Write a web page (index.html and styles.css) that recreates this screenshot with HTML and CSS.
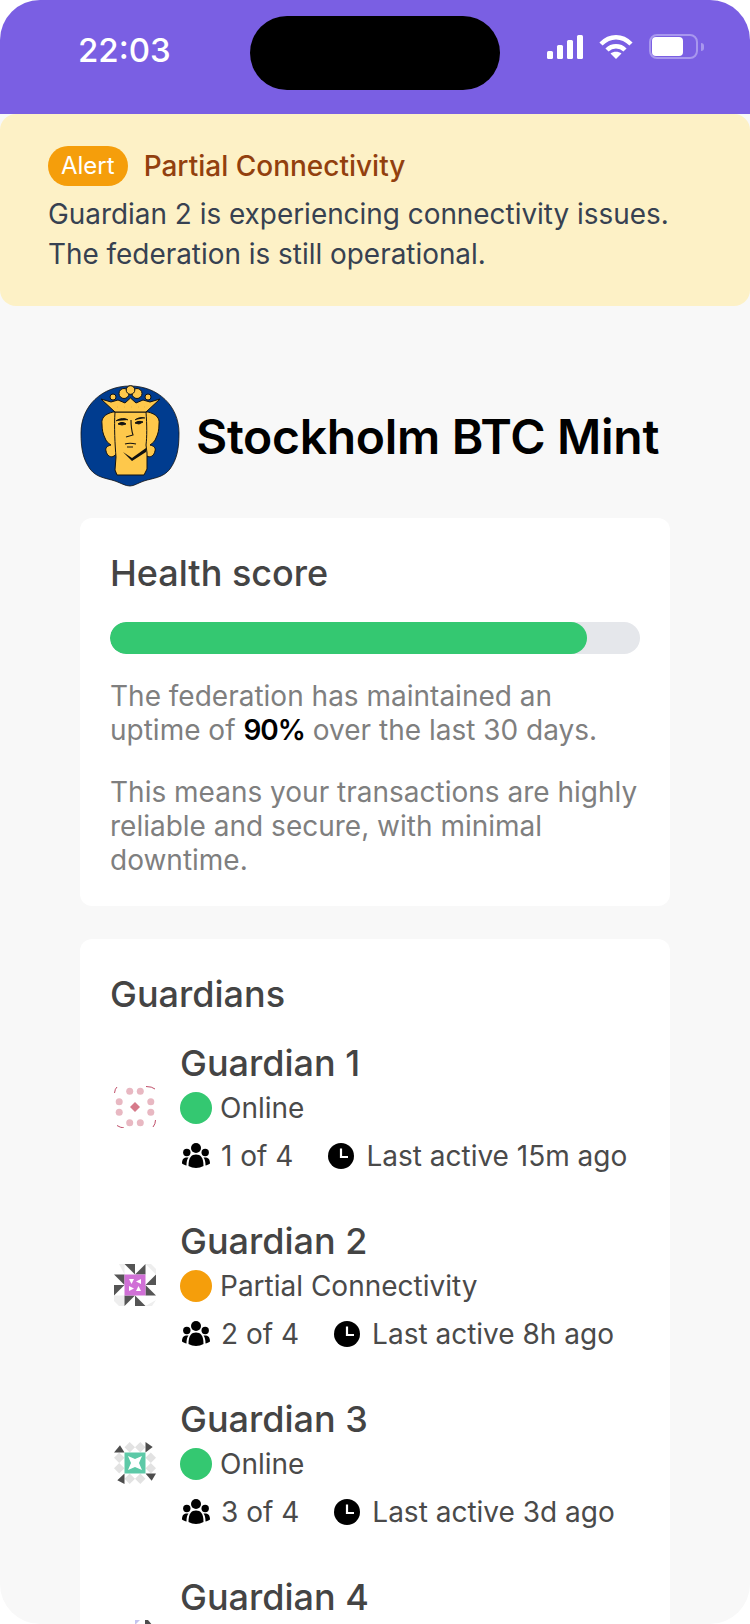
FILE: index.html
```html
<!DOCTYPE html>
<html lang="en">
<head>
    <meta charset="UTF-8">
    <meta name="viewport" content="width=device-width, initial-scale=1.0">
    <title>Stockholm BTC Mint</title>
    <link rel="stylesheet" href="styles.css">
</head>
<body>
<div class="screen">

    <header class="status-bar">
        <span class="time">22:03</span>
        <div class="island"></div>
        <div class="status-icons">
            <svg class="signal" width="36" height="24" viewBox="0 0 36 24" fill="#fff">
                <rect x="0" y="16" width="6" height="8" rx="1.500"/>
                <rect x="10" y="10" width="6" height="14" rx="1.500"/>
                <rect x="20" y="5" width="6" height="19" rx="1.500"/>
                <rect x="30" y="0" width="6" height="24" rx="1.500"/>
            </svg>
            <svg class="wifi" width="34" height="24" viewBox="0 0 34 24" fill="none" stroke="#fff" stroke-width="4.500">
                <path d="M2 9 C11 0 23 0 32 9"/>
                <path d="M8 15 C13 10 21 10 26 15"/>
                <path d="M11.500 18.500 L17 24 L22.500 18.500 C19.500 16 14.500 16 11.500 18.500 Z" fill="#fff" stroke="none"/>
            </svg>
            <div class="battery">
                <div class="battery-level"></div>
            </div>
            <div class="battery-cap"></div>
        </div>
    </header>

    <section class="alert">
        <div class="alert-head">
            <span class="alert-badge">Alert</span>
            <span class="alert-title">Partial Connectivity</span>
        </div>
        <p>Guardian 2 is experiencing connectivity issues.<br>The federation is still operational.</p>
    </section>

    <main class="content">
        <div class="mint">
            <svg class="mint-logo" width="100" height="102" viewBox="0 0 100 102">
                <path d="M50 1 C78 1 99 21 99 48 C99 64 97 74 90 84 C83 93 73 93 64 96 C58 98 54 101 50 101 C45 101 41 98 35 96 C26 93 17 93 10 84 C3 74 1 64 1 48 C1 21 22 1 50 1 Z" fill="#003c8f" stroke="#111" stroke-width="0.800"/>
                <path d="M33 27 C25 29 21 33 22 39 C22 45 23 49 25 53 C26 56 28 58 31 60 C27 61 25 63 26 66 C27 71 31 73 34 71 C37 69 38 67 38 65 L63 65 C63 67 64 69 67 71 C70 73 74 71 75 66 C76 63 74 61 70 60 C73 58 75 56 76 53 C78 49 79 45 79 39 C80 33 76 29 68 27 Z" fill="#fec84b" stroke="#111" stroke-width="1"/>
                <path d="M35 27 L66 27 C67 40 67 52 66 60 L67 68 L67 84 L64 90 L37 90 L35 85 L36 72 C35 60 34 42 35 27 Z" fill="#fec84b" stroke="#111" stroke-width="1"/>
                <g fill="#fec84b" stroke="#111" stroke-width="1">
                    <circle cx="33" cy="12" r="3"/>
                    <circle cx="68" cy="12" r="3"/>
                    <circle cx="44" cy="8.500" r="5"/>
                    <circle cx="57" cy="8.500" r="5"/>
                    <circle cx="50.500" cy="5" r="4.300"/>
                    <path d="M35 27 L21 14 L31 17 L38 15 L45 18 L50.500 13 L56 18 L63 15 L70 17 L80 14 L66 27 Z"/>
                </g>
                <path d="M37 22 L37.100 22 M44 22 L44.100 22 M51 22 L51.100 22 M58 22 L58.100 22 M64 22 L64.100 22" stroke="#111" stroke-width="1.200"/>
                <path d="M36 36 C40 33 45 33 48 35 M65 33 C61 32 57 33 55 35 M38 39 C40 37 44 37 46 39 L42 40 Z M55 38 C57 36 61 36 63 37 L59 39 Z" fill="#111" stroke="#111" stroke-width="1"/>
                <path d="M51 35 C51 42 52 47 53 50 L46 52 M45 59 C48 58 52 58 56 59 M47 62 L53 62" fill="none" stroke="#111" stroke-width="1.100"/>
                <path d="M43 67 L52 73 L66 63 L66 67 L52 76 Z" fill="#111"/>
            </svg>
            <h1>Stockholm BTC Mint</h1>
        </div>

        <section class="card health">
            <h2>Health score</h2>
            <div class="bar"><div class="bar-fill" style="width: 90%"></div></div>
            <p>The federation has maintained an uptime of <strong>90%</strong> over the last 30 days.</p>
            <p>This means your transactions are highly reliable and secure, with minimal downtime.</p>
        </section>

        <section class="card guardians">
            <h2>Guardians</h2>

            <div class="guardian">
                <svg class="avatar" width="42" height="42" viewBox="0 0 42 42">
                    <g fill="#e8b8c2">
                        <circle cx="15.700" cy="5.200" r="3.500"/><circle cx="26.300" cy="5.200" r="3.500"/>
                        <circle cx="5.200" cy="15.700" r="3.500"/><circle cx="36.800" cy="15.700" r="3.500"/>
                        <circle cx="5.200" cy="26.300" r="3.500"/><circle cx="36.800" cy="26.300" r="3.500"/>
                        <circle cx="15.700" cy="36.800" r="3.500"/><circle cx="26.300" cy="36.800" r="3.500"/>
                    </g>
                    <path d="M21 16 L26 21 L21 26 L16 21 Z" fill="#d67a8a"/>
                    <path d="M0.500 7 Q1 2.500 3 1 M32 0.500 Q38 0.500 41 3 M41.500 34 Q41.500 38 39 41 M3 39.500 Q6 41.500 10 42" fill="none" stroke="#b83a58" stroke-width="0.900"/>
                </svg>
                <div class="guardian-info">
                    <h3>Guardian 1</h3>
                    <div class="state"><span class="dot dot-online"></span>Online</div>
                    <div class="meta">
                        <span class="meta-item">
                            <svg class="icon" width="28" height="25" viewBox="0 0 28 25"><use href="#group"/></svg>
                            1 of 4
                        </span>
                        <span class="meta-item">
                            <svg class="icon" width="26" height="26" viewBox="0 0 26 26"><use href="#clock"/></svg>
                            Last active 15m ago
                        </span>
                    </div>
                </div>
            </div>

            <div class="guardian">
                <svg class="avatar" width="42" height="42" viewBox="0 0 42 42">
                    <g fill="#eee">
                        <path d="M5 0 L10.500 0 L10.500 10.500 Z"/><path d="M31.500 0 L37 0 L42 5 L42 10.500 Z"/>
                        <path d="M0 31.500 L10.500 31.500 L10.500 42 L5 42 L0 37 Z"/><path d="M31.500 42 L42 36 L38 42 Z"/>
                    </g>
                    <g fill="#555">
                        <path d="M10.500 0 L21 0 L21 10.500 Z"/><path d="M31.500 0 L31.500 10.500 L21 10.500 Z"/>
                        <path d="M0 10.500 L10.500 10.500 L10.500 21 Z"/><path d="M42 10.500 L42 21 L31.500 21 Z"/>
                        <path d="M0 21 L10.500 21 L0 31.500 Z"/><path d="M31.500 21 L42 31.500 L31.500 31.500 Z"/>
                        <path d="M10.500 31.500 L21 31.500 L10.500 42 Z"/><path d="M21 31.500 L31.500 42 L21 42 Z"/>
                    </g>
                    <rect x="10.500" y="10.500" width="21" height="21" fill="#d070d6"/>
                    <g fill="#fff">
                        <path d="M15 15 L20 15 L17.500 20 Z"/><path d="M27 15 L27 20 L22 17.500 Z"/>
                        <path d="M15 22 L20 24.500 L15 27 Z"/><path d="M24.500 22 L27 27 L22 27 Z"/>
                    </g>
                </svg>
                <div class="guardian-info">
                    <h3>Guardian 2</h3>
                    <div class="state"><span class="dot dot-partial"></span>Partial Connectivity</div>
                    <div class="meta">
                        <span class="meta-item">
                            <svg class="icon" width="28" height="25" viewBox="0 0 28 25"><use href="#group"/></svg>
                            2 of 4
                        </span>
                        <span class="meta-item">
                            <svg class="icon" width="26" height="26" viewBox="0 0 26 26"><use href="#clock"/></svg>
                            Last active 8h ago
                        </span>
                    </div>
                </div>
            </div>

            <div class="guardian">
                <svg class="avatar" width="42" height="42" viewBox="0 0 42 42">
                    <g fill="#e2e2e2">
                        <path d="M15.700 0 L21 5.200 L15.700 10.500 L10.500 5.200 Z"/><path d="M26.300 0 L31.500 5.200 L26.300 10.500 L21 5.200 Z"/>
                        <path d="M5.200 10.500 L10.500 15.700 L5.200 21 L0 15.700 Z"/><path d="M36.800 10.500 L42 15.700 L36.800 21 L31.500 15.700 Z"/>
                        <path d="M5.200 21 L10.500 26.300 L5.200 31.500 L0 26.300 Z"/><path d="M36.800 21 L42 26.300 L36.800 31.500 L31.500 26.300 Z"/>
                        <path d="M15.700 31.500 L21 36.800 L15.700 42 L10.500 36.800 Z"/><path d="M26.300 31.500 L31.500 36.800 L26.300 42 L21 36.800 Z"/>
                    </g>
                    <g fill="#4d4d4d">
                        <path d="M0 10.500 L10.500 10.500 L6 3.300 Z"/><path d="M31.500 0 L38.700 5 L31.500 10.500 Z"/>
                        <path d="M31.500 31.500 L42 31.500 L37.700 38.700 Z"/><path d="M10.500 31.500 L10.500 42 L3.300 38.300 Z"/>
                    </g>
                    <rect x="10.500" y="10.500" width="21" height="21" fill="#5cc9a7"/>
                    <path d="M14 14 L21 17 L28 14 L25 21 L28 28 L21 25 L14 28 L17 21 Z" fill="#fff"/>
                </svg>
                <div class="guardian-info">
                    <h3>Guardian 3</h3>
                    <div class="state"><span class="dot dot-online"></span>Online</div>
                    <div class="meta">
                        <span class="meta-item">
                            <svg class="icon" width="28" height="25" viewBox="0 0 28 25"><use href="#group"/></svg>
                            3 of 4
                        </span>
                        <span class="meta-item">
                            <svg class="icon" width="26" height="26" viewBox="0 0 26 26"><use href="#clock"/></svg>
                            Last active 3d ago
                        </span>
                    </div>
                </div>
            </div>

            <div class="guardian">
                <svg class="avatar" width="42" height="42" viewBox="0 0 42 42">
                    <path d="M21 0 L26 0 L21 5 Z" fill="#c5c5ee"/>
                    <path d="M31 0 L34 0 L39 6 L31 6 Z" fill="#4d4d4d"/>
                    <rect x="10.500" y="10.500" width="21" height="21" fill="#c5c5ee"/>
                </svg>
                <div class="guardian-info">
                    <h3>Guardian 4</h3>
                    <div class="state"><span class="dot dot-online"></span>Online</div>
                    <div class="meta">
                        <span class="meta-item">
                            <svg class="icon" width="28" height="25" viewBox="0 0 28 25"><use href="#group"/></svg>
                            4 of 4
                        </span>
                    </div>
                </div>
            </div>
        </section>
    </main>

    <svg class="defs" width="0" height="0">
        <symbol id="group" viewBox="0 0 28 25">
            <circle cx="14" cy="5" r="5"/>
            <circle cx="4.800" cy="9.500" r="3.700"/>
            <circle cx="23.200" cy="9.500" r="3.700"/>
            <path d="M6.500 23 C6.500 14 9.500 11.500 14 11.500 C18.500 11.500 21.500 14 21.500 23 C17 25.500 11 25.500 6.500 23 Z"/>
            <path d="M0 20.500 C0 16 2 14.500 5 14.500 L6.500 14.500 C5 16.500 4.500 19 4.500 22.500 C3 22.300 1.500 21.500 0 20.500 Z"/>
            <path d="M28 20.500 C28 16 26 14.500 23 14.500 L21.500 14.500 C23 16.500 23.500 19 23.500 22.500 C25 22.300 26.500 21.500 28 20.500 Z"/>
        </symbol>
        <symbol id="clock" viewBox="0 0 26 26">
            <circle cx="13" cy="13" r="13"/>
            <path d="M13 5.500 L13 14 L20 14" fill="none" stroke="#fff" stroke-width="2.200"/>
        </symbol>
    </svg>
</div>
</body>
</html>
```

FILE: styles.css
```css
* {
    box-sizing: border-box;
}

body {
    margin: 0;
    background-color: #fff;
    font-family: 'Inter', 'Noto Sans', sans-serif;
}

.screen {
    width: 750px;
    height: 1624px;
    background-color: #f8f8f8;
    border-radius: 40px;
    overflow: hidden;
}

.status-bar {
    height: 114px;
    background-color: #7a5fe3;
    position: relative;
    display: flex;
    justify-content: space-between;
    align-items: flex-start;
    padding: 30px 46px 0 78px;
}

.time {
    color: white;
    font-size: 33px;
    font-weight: 500;
    line-height: 40px;
}

.island {
    position: absolute;
    left: 250px;
    top: 16px;
    width: 250px;
    height: 74px;
    background-color: #000;
    border-radius: 37px;
}

.status-icons {
    display: flex;
    align-items: center;
    margin-top: 4px;
}

.wifi {
    margin-left: 16px;
}

.battery {
    width: 49px;
    height: 25px;
    margin-left: 16px;
    border: 2px solid #a897ee;
    border-radius: 8px;
    padding: 1px;
}

.battery-level {
    width: 31px;
    height: 19px;
    background-color: white;
    border-radius: 4px;
}

.battery-cap {
    width: 3px;
    height: 8px;
    margin-left: 3px;
    background-color: #a897ee;
    border-radius: 0 3px 3px 0;
}

.alert {
    height: 192px;
    padding: 32px 48px 0;
    background-color: #fdf1c6;
    border-radius: 16px;
}

.alert-head {
    display: flex;
    align-items: center;
    gap: 16px;
}

.alert-badge {
    background-color: #f59e0b;
    color: white;
    font-size: 24px;
    line-height: 40px;
    padding: 0 13px;
    border-radius: 20px;
}

.alert-title {
    color: #92400e;
    font-size: 28px;
    font-weight: 500;
}

.alert p {
    margin: 8px 0 0;
    color: #374151;
    font-size: 27.900px;
    line-height: 40px;
}

.content {
    padding: 79px 80px 0;
}

.mint {
    display: flex;
    align-items: center;
    gap: 16px;
    margin-bottom: 31px;
}

.mint-logo {
    flex: none;
}

h1 {
    margin: 0;
    color: #000;
    font-size: 48px;
    font-weight: 600;
    letter-spacing: -0.300px;
    white-space: nowrap;
}

.card {
    background-color: #fff;
    border-radius: 12px;
    padding: 29px 30px;
}

.health {
    height: 388px;
    margin-bottom: 33px;
}

h2 {
    margin: 0;
    color: #444;
    font-size: 36px;
    font-weight: 450;
    line-height: 52px;
}

.bar {
    height: 32px;
    margin-top: 23px;
    margin-bottom: 25px;
    background-color: #e5e7eb;
    border-radius: 16px;
    overflow: hidden;
}

.bar-fill {
    height: 100%;
    background-color: #34c871;
    border-radius: 16px;
}

.health p {
    margin: 0 0 28px;
    color: #7f7f7f;
    font-size: 28px;
    line-height: 34px;
}

.health strong {
    color: #000;
    font-weight: 600;
    letter-spacing: -1px;
}

.guardians {
    height: 900px;
}

.guardian {
    display: flex;
    align-items: center;
    gap: 24px;
    height: 178px;
    padding-left: 4px;
}

.avatar {
    flex: none;
    margin-bottom: 4px;
}

h3 {
    margin: 0;
    color: #444;
    font-size: 36px;
    font-weight: 450;
    line-height: 44px;
}

.state, .meta {
    display: flex;
    align-items: center;
    color: #4a4a4a;
    font-size: 28px;
    line-height: 44px;
}

.state {
    margin-top: 1px;
}

.dot {
    width: 32px;
    height: 32px;
    border-radius: 50%;
    margin-right: 8px;
}

.dot-online {
    background-color: #34c871;
}

.dot-partial {
    background-color: #f59e0b;
}

.meta {
    margin-top: 4px;
    gap: 35px;
}

.meta-item {
    display: flex;
    align-items: center;
    gap: 12px;
}

.meta-item:first-child .icon {
    margin-left: 2px;
    margin-right: -1px;
}

.icon {
    flex: none;
}

.defs {
    position: absolute;
}
```
